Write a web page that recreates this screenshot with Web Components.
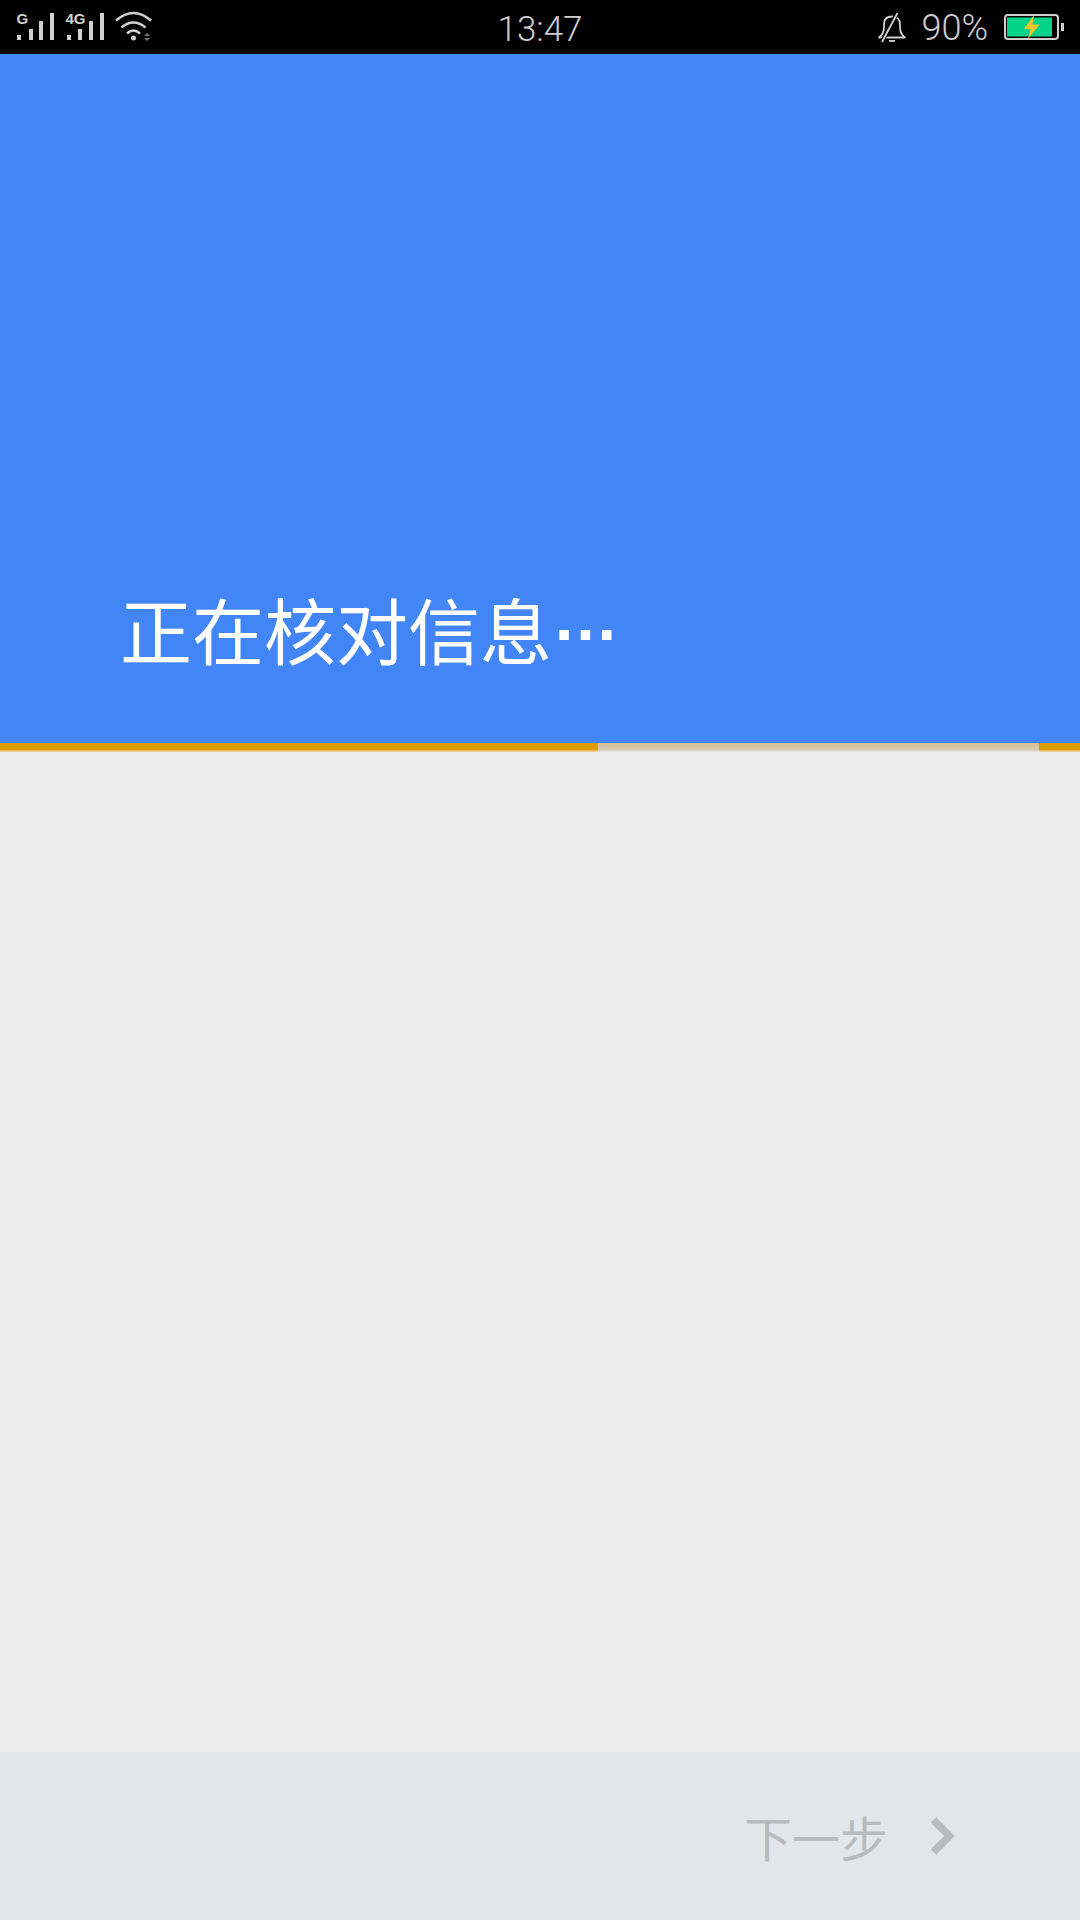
<!DOCTYPE html>
<html>
<head>
<meta charset="utf-8">
<title>正在核对信息</title>
<style>
    html, body { margin: 0; padding: 0; background: #eeeeee; }
    body { width: 1080px; height: 1920px; display: flex; flex-direction: column; font-family: "Liberation Sans", "Noto Sans CJK SC", sans-serif; }
    main-filler { flex: 1; }
</style>
</head>
<body>
<status-bar time="13:47" battery="90%"></status-bar>
<hero-panel>正在核对信息<span slot="dots">…</span></hero-panel>
<progress-line></progress-line>
<main-filler></main-filler>
<footer-bar>下一步</footer-bar>

<script>
class StatusBar extends HTMLElement {
    constructor() {
        super();
        const shadowRoot = this.attachShadow({mode: "open"});
        shadowRoot.innerHTML = `
        <style>
            :host {
                display: grid;
                grid-template-columns: 1fr auto 1fr;
                align-items: center;
                height: 54px;
                background: #000;
                color: #cdcdcd;
                font: 300 36px Roboto, "Liberation Sans", sans-serif;
            }
            svg { display: block; }
            .left { display: flex; }
            .right { display: flex; justify-content: flex-end; align-items: center; }
            .time { position: relative; top: 2px; font-size: 35px; }
            .pct { margin: 0 16px 0 14px; position: relative; top: 1px; }
        </style>
        <div class="left">
            <svg width="160" height="54" viewBox="0 0 160 54">
                <g fill="#d0d0d0">
                    <rect x="17" y="35" width="4" height="5"/>
                    <rect x="29" y="29" width="4" height="11"/>
                    <rect x="39" y="21" width="4" height="19"/>
                    <rect x="50" y="13" width="4" height="27"/>
                    <rect x="67" y="35" width="4" height="5"/>
                    <rect x="78" y="29" width="4" height="11"/>
                    <rect x="89" y="21" width="4" height="19"/>
                    <rect x="100" y="13" width="4" height="27"/>
                    <circle cx="133.500" cy="38" r="2.500"/>
                    <text x="16.500" y="23.500" font-family="Liberation Sans" font-weight="700" font-size="15">G</text>
                    <text x="65.500" y="23.500" font-family="Liberation Sans" font-weight="700" font-size="15">4G</text>
                </g>
                <g fill="none" stroke="#d0d0d0" stroke-width="2.600">
                    <path d="M116 20.500Q133.500 5.500 151 20.500"/>
                    <path d="M121.500 27.500Q133.500 17.500 145.500 27.500"/>
                    <path d="M127 33.500Q133.500 27.500 140 33.500"/>
                </g>
                <path d="M147 33l3 3h-6zM147 41l3-3h-6z" fill="#777"/>
            </svg>
        </div>
        <div class="time">${this.getAttribute("time")}</div>
        <div class="right">
            <svg width="30" height="54" viewBox="0 0 30 54">
                <g fill="none" stroke="#d0d0d0" stroke-width="1.800" stroke-linejoin="round">
                    <path d="M2 37.500Q7 34 7 27V24C7 19 10 16.500 15 16.500C20 16.500 23 19.500 23 24V27Q23 34 28 37.500Z" />
                    <path d="M20 13L5 42" stroke="#000" stroke-width="4"/>
                    <path d="M20.500 13L5 42"/>
                </g>
                <rect x="12" y="40" width="6" height="1.800" fill="#d0d0d0"/>
            </svg>
            <div class="pct">${this.getAttribute("battery")}</div>
            <svg width="60" height="54" viewBox="0 0 60 54" style="margin-right:16px">
                <rect x="1" y="15" width="53" height="24" rx="3" fill="none" stroke="#cfcfcf" stroke-width="2"/>
                <rect x="3" y="17.500" width="45" height="19" fill="#03d38a"/>
                <rect x="57" y="23" width="3" height="8" fill="#cfcfcf"/>
                <path d="M30 15L20 29H26.500L24 39L35.500 24.500H28.500Z" fill="#f3c526"/>
            </svg>
        </div>
        `;
    }
}

class HeroPanel extends HTMLElement {
    constructor() {
        super();
        const shadowRoot = this.attachShadow({mode: "open"});
        shadowRoot.innerHTML = `
        <style>
            :host {
                display: flex;
                align-items: flex-end;
                box-sizing: border-box;
                height: 689px;
                padding: 0 0 79px 120px;
                background: #4285f6;
                color: #fff;
                font: 400 72px/1 "Noto Sans CJK SC", sans-serif;
            }
            ::slotted([slot="dots"]) {
                margin: 0 0 14px 0;
                font: 700 67px/1 "Liberation Sans", sans-serif;
            }
        </style>
        <slot></slot><slot name="dots"></slot>
        `;
    }
}

class ProgressLine extends HTMLElement {
    constructor() {
        super();
        const shadowRoot = this.attachShadow({mode: "open"});
        shadowRoot.innerHTML = `
        <style>
            :host {
                display: grid;
                grid-template-columns: 598px 1fr 41px;
                height: 9px;
                background: linear-gradient(#cdbd97, #d8cfb8);
            }
            .bar { background: #dd9f00; }
            .bar.first { grid-area: 1 / 1; }
            .bar.last { grid-area: 1 / 3; }
            .edge { grid-area: 1 / 1 / 2 / 4; align-self: end; height: 2px; background: linear-gradient(rgba(238,238,238,.25), rgba(238,238,238,.75)); }
        </style>
        <div class="bar first"></div><div class="bar last"></div>
        <div class="edge"></div>
        `;
    }
}

class FooterBar extends HTMLElement {
    constructor() {
        super();
        const shadowRoot = this.attachShadow({mode: "open"});
        shadowRoot.innerHTML = `
        <style>
            :host {
                display: flex;
                justify-content: flex-end;
                align-items: center;
                gap: 42px;
                box-sizing: border-box;
                height: 168px;
                padding: 0 126px 0 0;
                background: #e2e6e9;
                color: #b9bbbc;
                font: 400 48px/1 "Noto Sans CJK SC", sans-serif;
            }
            svg { display: block; }
        </style>
        <slot></slot>
        <svg width="24" height="38" viewBox="0 0 24 38">
            <path d="M3.500 3L19.500 19L3.500 35" fill="none" stroke="#b9bbbc" stroke-width="7.500"/>
        </svg>
        `;
    }
}

customElements.define("status-bar", StatusBar);
customElements.define("hero-panel", HeroPanel);
customElements.define("progress-line", ProgressLine);
customElements.define("footer-bar", FooterBar);
</script>
</body>
</html>
